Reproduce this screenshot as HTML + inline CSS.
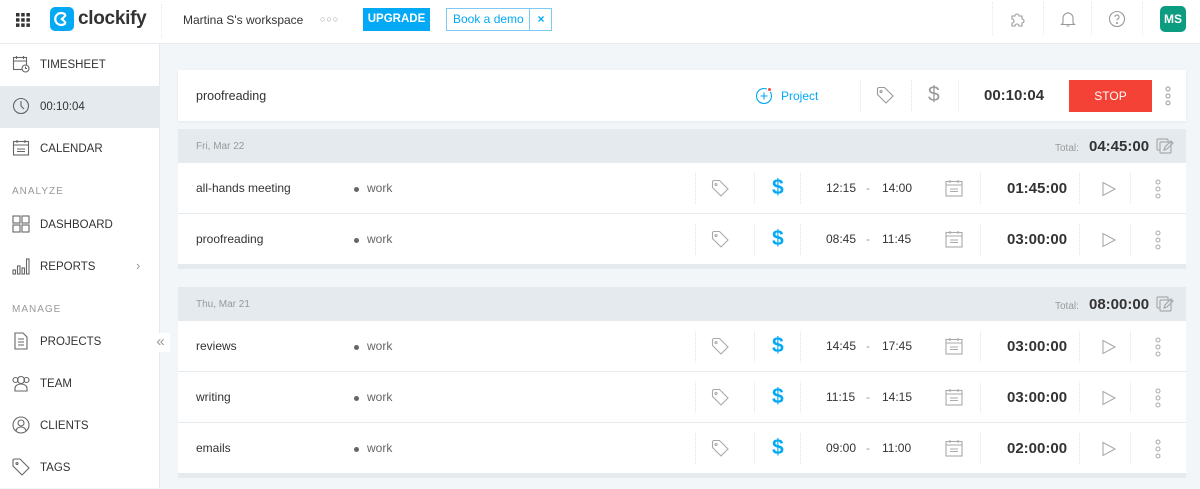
<!DOCTYPE html>
<html><head><meta charset="utf-8"><style>
*{box-sizing:border-box;margin:0;padding:0}
body{width:1200px;height:488px;overflow:hidden;background:#f2f6f8;font-family:"Liberation Sans",Arial,sans-serif;color:#333;position:relative}
.a{position:absolute}
.top{left:0;top:0;width:1200px;height:44px;background:#fff;border-bottom:1px solid #e4eaee}
.side{left:0;top:44px;width:160px;height:444px;background:#fff;border-right:1px solid #e4eaee}
.nav{position:absolute;left:0;width:160px;height:42px;font-size:11.5px;color:#333;display:flex;align-items:center;padding-left:40px}
.nav svg{position:absolute;left:12px;top:11px}
.sec{position:absolute;left:12px;font-size:10px;color:#999;letter-spacing:1px}
.card{position:absolute;left:178px;width:1008px;background:#fff}
.hdr{position:absolute;left:178px;width:1008px;height:34px;background:#e4eaee}
.row{position:absolute;left:178px;width:1008px;height:51px;background:#fff;border-bottom:1px solid #e4eaee}
.row .d{position:absolute;left:18px;top:18px;font-size:12px}
.row .p{position:absolute;left:189px;top:18px;font-size:12px;color:#666}
.row .p:before{content:"";position:absolute;left:-13px;top:6px;width:5px;height:5px;border-radius:50%;background:#666}
.sep{position:absolute;top:10px;height:31px;border-left:1px dotted #dfe5ea}
.t{position:absolute;top:18px;font-size:12px;color:#333}
.dur{position:absolute;top:17px;left:829px;font-size:15px;font-weight:bold;color:#333}
.ic{position:absolute}
</style></head><body>
<div class="a top">
 <svg class="a" style="left:16px;top:13px" width="14" height="14" viewBox="0 0 14 14" fill="#333"><rect x="0" y="0" width="3.5" height="3.5"/><rect x="5.2" y="0" width="3.5" height="3.5"/><rect x="10.4" y="0" width="3.5" height="3.5"/><rect x="0" y="5.2" width="3.5" height="3.5"/><rect x="5.2" y="5.2" width="3.5" height="3.5"/><rect x="10.4" y="5.2" width="3.5" height="3.5"/><rect x="0" y="10.4" width="3.5" height="3.5"/><rect x="5.2" y="10.4" width="3.5" height="3.5"/><rect x="10.4" y="10.4" width="3.5" height="3.5"/></svg>
 <div class="a" style="left:50px;top:7px;width:24px;height:24px;border-radius:5px;background:#03a9f4"></div>
 <svg class="a" style="left:50px;top:7px" width="24" height="24" viewBox="0 0 24 24"><path d="M15.5 7.8A6 6 0 1 0 15.5 16.2" fill="none" stroke="#fff" stroke-width="2.2"/><path d="M16 8l-4 4 4 4" fill="none" stroke="#fff" stroke-width="2"/><circle cx="12" cy="12" r="1.4" fill="#fff"/></svg>
 <div class="a" style="left:78px;top:8px;font-size:19px;font-weight:bold;color:#333;letter-spacing:-0.3px">clockify</div>
 <div class="a" style="left:161px;top:4px;height:34px;border-left:1px dotted #e4eaee"></div>
 <div class="a" style="left:183px;top:13px;font-size:12px;color:#333">Martina S's workspace</div>
 <div class="a" style="left:320px;top:14px;font-size:9px;color:#999;letter-spacing:1px">○○○</div>
 <div class="a" style="left:363px;top:8px;width:67px;height:23px;background:#03a9f4;color:#fff;font-size:11.5px;font-weight:bold;text-align:center;line-height:23px">UPGRADE</div>
 <div class="a" style="left:446px;top:8px;width:106px;height:23px;border:1px solid #7dcbf5;color:#03a9f4;font-size:12px;line-height:21px;padding-left:6px">Book a demo<span style="position:absolute;left:82px;top:0;height:21px;border-left:1px solid #7dcbf5;width:23px;text-align:center;font-weight:bold">×</span></div>
 <div class="a" style="left:992px;top:2px;height:34px;border-left:1px dotted #e4eaee"></div>
 <div class="a" style="left:1043px;top:2px;height:34px;border-left:1px dotted #e4eaee"></div>
 <div class="a" style="left:1091px;top:2px;height:34px;border-left:1px dotted #e4eaee"></div>
 <div class="a" style="left:1142px;top:2px;height:34px;border-left:1px dotted #e4eaee"></div>
 <svg class="a" style="left:1009px;top:10px" width="18" height="18" viewBox="0 0 18 18" fill="none" stroke="#999" stroke-width="1.1"><path d="M3 6h3a2 2 0 1 1 4 0h3v3a2 2 0 1 1 0 4v3H10a2 2 0 1 0-4 0H3v-3a2 2 0 1 0 0-4z"/></svg>
 <svg class="a" style="left:1059px;top:10px" width="18" height="18" viewBox="0 0 18 18" fill="none" stroke="#999" stroke-width="1.1"><path d="M4 13V8a5 5 0 0 1 10 0v5l1.5 1.5h-13z M7.5 16h3M9 2v1"/></svg>
 <svg class="a" style="left:1108px;top:10px" width="18" height="18" viewBox="0 0 18 18" fill="none" stroke="#999" stroke-width="1.1"><circle cx="9" cy="9" r="7.5"/><path d="M7 7a2 2 0 1 1 2.5 2c-.5.2-.5.7-.5 1.5"/><circle cx="9" cy="13" r=".5" fill="#999"/></svg>
 <div class="a" style="left:1160px;top:6px;width:26px;height:26px;border-radius:5px;background:#0c9c7f;color:#fff;font-size:12px;font-weight:bold;text-align:center;line-height:26px">MS</div>
</div>
<div class="a side">
 <div class="nav" style="top:0"><svg width="18" height="18" viewBox="0 0 18 18" fill="none" stroke="#666" stroke-width="1.1"><rect x="1.5" y="2.5" width="13" height="12"/><path d="M1.5 6h13M4.5 1v3M11.5 1v3"/><circle cx="13.5" cy="13.5" r="3.5" fill="#fff"/><path d="M13.5 11.5v2h1.5"/></svg>TIMESHEET</div>
 <div class="nav" style="top:42px;background:#e4eaee"><svg width="18" height="18" viewBox="0 0 18 18" fill="none" stroke="#666" stroke-width="1.1"><circle cx="9" cy="9" r="7.5"/><path d="M9 4v5l3 3"/></svg>00:10:04</div>
 <div class="nav" style="top:84px"><svg width="18" height="18" viewBox="0 0 18 18" fill="none" stroke="#666" stroke-width="1.1"><rect x="1.5" y="2.5" width="15" height="13.5"/><path d="M1.5 6h15M5 1v3M13 1v3M5 10h8M5 12.5h8"/></svg>CALENDAR</div>
 <div class="sec" style="top:142px">ANALYZE</div>
 <div class="nav" style="top:160px"><svg width="18" height="18" viewBox="0 0 18 18" fill="none" stroke="#666" stroke-width="1.1"><rect x="1" y="1" width="7" height="7"/><rect x="10" y="1" width="7" height="7"/><rect x="1" y="10" width="7" height="7"/><rect x="10" y="10" width="7" height="7"/></svg>DASHBOARD</div>
 <div class="nav" style="top:202px"><svg width="18" height="18" viewBox="0 0 18 18" fill="none" stroke="#666" stroke-width="1.1"><rect x="1" y="13" width="2.5" height="4"/><rect x="5.5" y="9" width="2.5" height="8"/><rect x="10" y="11" width="2.5" height="6"/><rect x="14.5" y="2" width="2.5" height="15"/></svg>REPORTS<span style="position:absolute;left:136px;top:12px;color:#999;font-size:13px">›</span></div>
 <div class="sec" style="top:260px">MANAGE</div>
 <div class="nav" style="top:277px"><svg width="18" height="18" viewBox="0 0 18 18" fill="none" stroke="#666" stroke-width="1.1"><path d="M3 1h8l4 4v12H3z M6 7h6M6 10h6M6 13h6"/></svg>PROJECTS</div>
 <div class="nav" style="top:319px"><svg width="18" height="18" viewBox="0 0 18 18" fill="none" stroke="#666" stroke-width="1.1"><circle cx="9" cy="6" r="3.5"/><path d="M3 17v-3a6 4 0 0 1 12 0v3z"/><circle cx="3.5" cy="6" r="2.5"/><circle cx="14.5" cy="6" r="2.5"/></svg>TEAM</div>
 <div class="nav" style="top:361px"><svg width="18" height="18" viewBox="0 0 18 18" fill="none" stroke="#666" stroke-width="1.1"><circle cx="9" cy="9" r="8"/><circle cx="9" cy="7" r="3"/><path d="M4 15a5 4 0 0 1 10 0"/></svg>CLIENTS</div>
 <div class="nav" style="top:403px"><svg width="18" height="18" viewBox="0 0 18 18" fill="none" stroke="#666" stroke-width="1.1"><path d="M1 2v6l9 9 7-7-9-9H2z"/><circle cx="5" cy="5.5" r="1"/></svg>TAGS</div>
</div>
<div class="a" style="left:151px;top:333px;width:19px;height:19px;background:#fff;color:#999;font-size:15px;text-align:center;line-height:17px">«</div>

<div class="card" style="top:70px;height:51px;box-shadow:0 1px 3px rgba(0,0,0,.06)">
 <div class="a" style="left:18px;top:19px;font-size:12.5px">proofreading</div>
 <svg class="a" style="left:577px;top:16px" width="18" height="18" viewBox="0 0 18 18" fill="none" stroke="#03a9f4" stroke-width="1.1"><circle cx="9" cy="10" r="7.5"/><path d="M9 6.5v7M5.5 10h7"/><circle cx="14.5" cy="3.5" r="2" fill="#f44336" stroke="#fff"/></svg>
 <div class="a" style="left:603px;top:19px;font-size:12px;color:#03a9f4">Project</div>
 <div class="sep" style="left:682px"></div><div class="sep" style="left:733px"></div><div class="sep" style="left:780px"></div>
 <svg class="a" style="left:698px;top:16px" width="19" height="19" viewBox="0 0 19 19" fill="none" stroke="#999" stroke-width="1.1"><path d="M1.5 2.5v6l8.5 8.5 7-7-8.5-8.5h-6z"/><circle cx="5" cy="5.5" r="1"/></svg>
 <div class="a" style="left:750px;top:13px;font-size:21px;color:#999">$</div>
 <div class="a" style="left:806px;top:17px;font-size:15px;font-weight:bold">00:10:04</div>
 <div class="a" style="left:891px;top:10px;width:83px;height:32px;background:#f44336;color:#fff;font-size:12px;text-align:center;line-height:32px">STOP</div>
 <svg class="a" style="left:986px;top:15px" width="8" height="22" viewBox="0 0 8 22" fill="none" stroke="#999"><circle cx="4" cy="4" r="2"/><circle cx="4" cy="11" r="2"/><circle cx="4" cy="18" r="2"/></svg>
</div>

<div class="hdr" style="top:129px"><div class="a" style="left:18px;top:12px;font-size:10px;color:#999">Fri, Mar 22</div><div class="a" style="left:877px;top:14px;font-size:10px;color:#999">Total:</div><div class="a" style="left:911px;top:9px;font-size:15px;font-weight:bold">04:45:00</div><svg class="a" style="left:978px;top:9px" width="18" height="18" viewBox="0 0 18 18" fill="none" stroke="#aaa" stroke-width="1.2"><rect x="1" y="1" width="11" height="11" rx="1"/><rect x="4" y="4" width="11" height="11" rx="1" fill="#e4eaee"/><path d="M8 12l1-3 6-6 2 2-6 6z"/></svg></div>
<div class="hdr" style="top:287px"><div class="a" style="left:18px;top:12px;font-size:10px;color:#999">Thu, Mar 21</div><div class="a" style="left:877px;top:14px;font-size:10px;color:#999">Total:</div><div class="a" style="left:911px;top:9px;font-size:15px;font-weight:bold">08:00:00</div><svg class="a" style="left:978px;top:9px" width="18" height="18" viewBox="0 0 18 18" fill="none" stroke="#aaa" stroke-width="1.2"><rect x="1" y="1" width="11" height="11" rx="1"/><rect x="4" y="4" width="11" height="11" rx="1" fill="#e4eaee"/><path d="M8 12l1-3 6-6 2 2-6 6z"/></svg></div>
<div class="a" style="left:178px;top:265px;width:1008px;height:4px;background:#e4eaee"></div>
<div class="a" style="left:178px;top:474px;width:1008px;height:4px;background:#e4eaee"></div>

<div id="rows"></div>
<script>
var rows=[[163,"all-hands meeting","12:15","14:00","01:45:00"],[214,"proofreading","08:45","11:45","03:00:00"],[321,"reviews","14:45","17:45","03:00:00"],[372,"writing","11:15","14:15","03:00:00"],[423,"emails","09:00","11:00","02:00:00"]];
var h="";rows.forEach(function(r){h+='<div class="row" style="top:'+r[0]+'px"><div class="d">'+r[1]+'</div><div class="p">work</div>'+
'<div class="sep" style="left:517px"></div><div class="sep" style="left:576px"></div><div class="sep" style="left:622px"></div><div class="sep" style="left:802px"></div><div class="sep" style="left:901px"></div><div class="sep" style="left:952px"></div>'+
'<svg class="ic" style="left:533px;top:16px" width="19" height="19" viewBox="0 0 19 19" fill="none" stroke="#aaa" stroke-width="1.1"><path d="M1.5 2.5v6l8.5 8.5 7-7-8.5-8.5h-6z"/><circle cx="5" cy="5.5" r="1"/></svg>'+
'<div class="ic" style="left:594px;top:13px;font-size:21px;color:#03a9f4;font-weight:bold">$</div>'+
'<div class="t" style="left:648px">'+r[2]+'</div><div class="t" style="left:688px;color:#999">-</div><div class="t" style="left:704px">'+r[3]+'</div>'+
'<svg class="ic" style="left:767px;top:16px" width="18" height="18" viewBox="0 0 18 18" fill="none" stroke="#aaa" stroke-width="1.1"><rect x="1" y="2.5" width="16" height="14.5"/><path d="M1 6h16M5 1v3M13 1v3M5 10h8M5 12.5h8"/></svg>'+
'<div class="dur">'+r[4]+'</div>'+
'<svg class="ic" style="left:923px;top:18px" width="16" height="16" viewBox="0 0 16 16" fill="none" stroke="#aaa" stroke-width="1.1"><path d="M2 1.5l12 6.5-12 6.5z"/></svg>'+
'<svg class="ic" style="left:976px;top:15px" width="8" height="22" viewBox="0 0 8 22" fill="none" stroke="#aaa"><circle cx="4" cy="4" r="2"/><circle cx="4" cy="11" r="2"/><circle cx="4" cy="18" r="2"/></svg></div>';});
document.getElementById("rows").innerHTML=h;
</script>
</body></html>
